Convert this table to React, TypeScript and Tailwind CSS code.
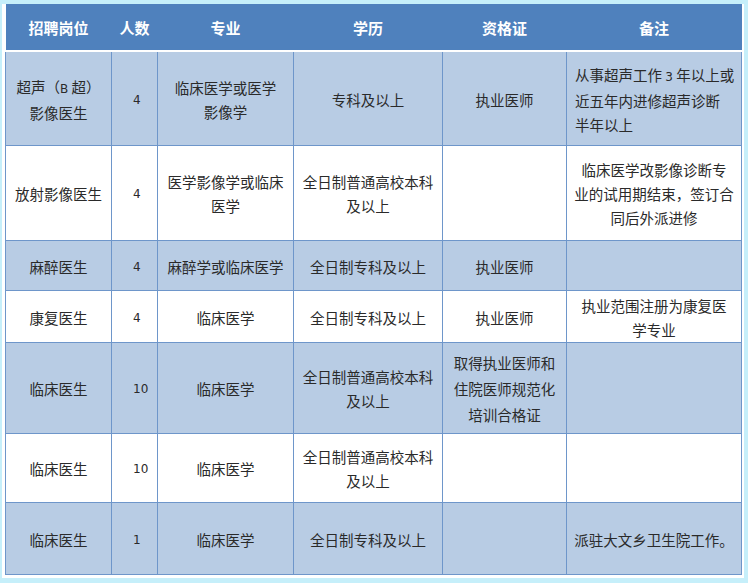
import React from "react";

type Row = {
  post: React.ReactNode;
  count: string;
  major: React.ReactNode;
  edu: React.ReactNode;
  cert?: React.ReactNode;
  note?: React.ReactNode;
  noteLeft?: boolean;
  noteLh?: string;
  certLh?: string;
  h: string;
  shaded: boolean;
};

const rows: Row[] = [
  {
    post: (
      <>
        超声（<span className="font-['DejaVu_Sans'] text-[12px]">B</span> 超）
        <br />
        影像医生
      </>
    ),
    count: "4",
    major: (
      <>
        临床医学或医学
        <br />
        影像学
      </>
    ),
    edu: "专科及以上",
    cert: "执业医师",
    note: (
      <>
        从事超声工作 <span className="font-['DejaVu_Sans'] text-[12px]">3</span> 年以上或
        <br />
        近五年内进修超声诊断
        <br />
        半年以上
      </>
    ),
    noteLeft: true,
    noteLh: "leading-[20.5px]",
    h: "h-[94px]",
    shaded: true,
  },
  {
    post: "放射影像医生",
    count: "4",
    major: (
      <>
        医学影像学或临床
        <br />
        医学
      </>
    ),
    edu: (
      <>
        全日制普通高校本科
        <br />
        及以上
      </>
    ),
    note: (
      <>
        临床医学改影像诊断专
        <br />
        业的试用期结束，签订合
        <br />
        同后外派进修
      </>
    ),
    h: "h-[95px]",
    shaded: false,
  },
  {
    post: "麻醉医生",
    count: "4",
    major: "麻醉学或临床医学",
    edu: "全日制专科及以上",
    cert: "执业医师",
    h: "h-[50px]",
    shaded: true,
  },
  {
    post: "康复医生",
    count: "4",
    major: "临床医学",
    edu: "全日制专科及以上",
    cert: "执业医师",
    note: (
      <>
        执业范围注册为康复医
        <br />
        学专业
      </>
    ),
    h: "h-[52px]",
    shaded: false,
  },
  {
    post: "临床医生",
    count: "10",
    major: "临床医学",
    edu: (
      <>
        全日制普通高校本科
        <br />
        及以上
      </>
    ),
    cert: (
      <>
        取得执业医师和
        <br />
        住院医师规范化
        <br />
        培训合格证
      </>
    ),
    certLh: "leading-[26px]",
    h: "h-[91px]",
    shaded: true,
  },
  {
    post: "临床医生",
    count: "10",
    major: "临床医学",
    edu: (
      <>
        全日制普通高校本科
        <br />
        及以上
      </>
    ),
    h: "h-[69px]",
    shaded: false,
  },
  {
    post: "临床医生",
    count: "1",
    major: "临床医学",
    edu: "全日制专科及以上",
    note: "派驻大文乡卫生院工作。",
    h: "h-[72px]",
    shaded: true,
  },
];

const cell = "border border-[#6e96ca] p-0 pt-[3px] align-middle text-center leading-[24px]";

export default function App() {
  const heads = ["招聘岗位", "人数", "专业", "学历", "资格证", "备注"];
  return (
    <div className="w-[748px] h-[583px] bg-[#c6effa] pt-[4px] pl-[2px] font-['Noto_Sans_CJK_SC',sans-serif] text-[14.5px] text-[#2a2a2a]">
      <div className="w-[742px] bg-white px-[3px] pb-[3px]">
        <table className="w-[736px] table-fixed border-collapse">
          <colgroup>
            <col className="w-[106px]" />
            <col className="w-[46px]" />
            <col className="w-[136px]" />
            <col className="w-[149px]" />
            <col className="w-[124px]" />
            <col className="w-[175px]" />
          </colgroup>
          <thead>
            <tr className="h-[47px]">
              {heads.map((t) => (
                <th
                  key={t}
                  className="bg-[#4f81bd] border-b-2 border-white p-0 pt-[2px] text-[15px] font-bold text-white text-center align-middle"
                >
                  {t}
                </th>
              ))}
            </tr>
          </thead>
          <tbody>
            {rows.map((r, i) => (
              <tr key={i} className={`${r.h} ${r.shaded ? "bg-[#b8cce4]" : "bg-white"}`}>
                <td className={cell}>{r.post}</td>
                <td className={`${cell} !text-left pl-[21px] font-['DejaVu_Sans',sans-serif] text-[12px]`}>
                  {r.count}
                </td>
                <td className={cell}>{r.major}</td>
                <td className={cell}>{r.edu}</td>
                <td className={`${cell} ${r.certLh ?? ""}`}>{r.cert}</td>
                <td
                  className={`${cell} ${r.noteLh ?? ""} ${r.noteLeft ? "!text-left pl-[8px]" : ""}`}
                >
                  {r.note}
                </td>
              </tr>
            ))}
          </tbody>
        </table>
      </div>
    </div>
  );
}
